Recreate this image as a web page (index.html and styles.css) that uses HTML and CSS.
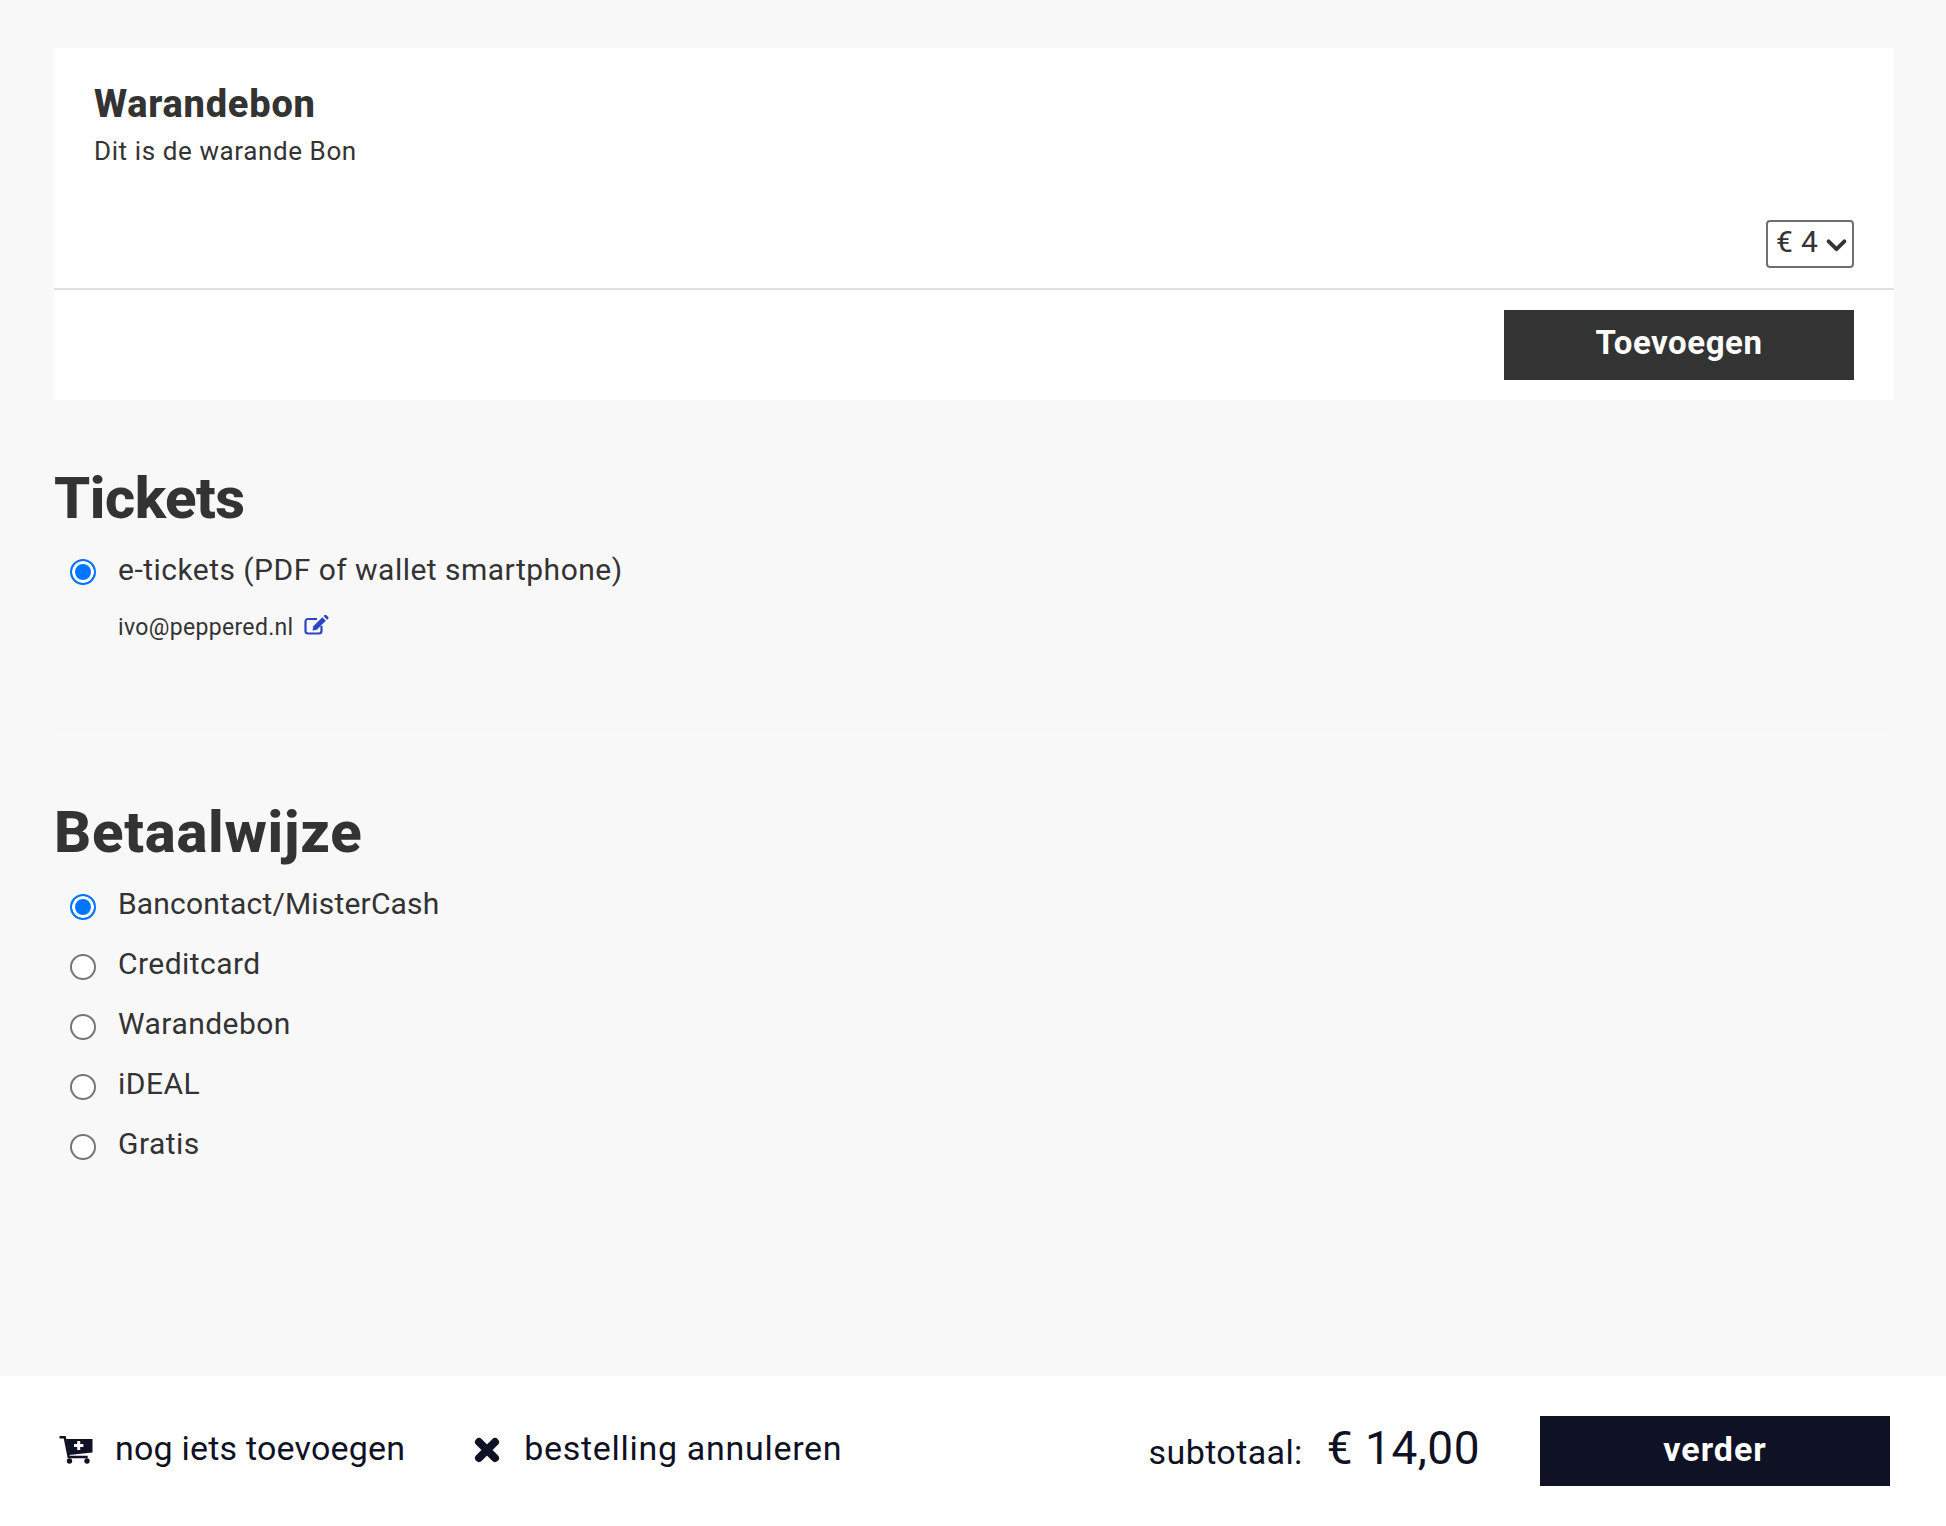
FILE: index.html
```html
<!DOCTYPE html>
<html lang="nl">
<head>
<meta charset="utf-8">
<title>Bestelling</title>
<link rel="stylesheet" href="styles.css">
</head>
<body>
<div class="page">
  <main class="content">
    <section class="card">
      <div class="card-body">
        <h3 class="card-title">Warandebon</h3>
        <p class="card-desc">Dit is de warande Bon</p>
        <div class="card-select">
          <div class="select-box">
            <span class="select-value">€ 4</span>
            <svg class="chevron" viewBox="0 0 20 14"><path d="M2.5 3 10 10.5 17.5 3" fill="none" stroke="#333" stroke-width="3.6" stroke-linecap="round" stroke-linejoin="round"/></svg>
          </div>
        </div>
      </div>
      <div class="card-foot"><button class="btn-add">Toevoegen</button></div>
    </section>

    <section class="block tickets">
      <h2 class="heading">Tickets</h2>
      <label class="option"><input class="radio" type="radio" name="ticket" checked><span class="option-text">e-tickets (PDF of wallet smartphone)</span></label>
      <div class="email"><span class="email-text">ivo@peppered.nl</span>
        <svg class="edit-icon" viewBox="0 0 25 20">
          <path d="M13 4H4A2.5 2.5 0 0 0 1.500 6.500V16A2.500 2.500 0 0 0 4 18.500h11a2.500 2.500 0 0 0 2.500-2.500V11" fill="none" stroke="#2a45c0" stroke-width="2.200"/>
          <path d="M8.500 15.500l.8-4.300L18.300 2.200l3.500 3.500-9 9z" fill="#2a45c0"/>
          <path d="M19.500 1l1-1a1.200 1.200 0 0 1 1.700 0l2 2a1.200 1.200 0 0 1 0 1.700l-1 1z" fill="#2a45c0"/>
        </svg>
      </div>
    </section>

    <section class="block pay">
      <h2 class="heading heading-wide">Betaalwijze</h2>
      <label class="option"><input class="radio" type="radio" name="pay" checked><span class="option-text option-tight">Bancontact/MisterCash</span></label>
      <label class="option"><input class="radio" type="radio" name="pay"><span class="option-text">Creditcard</span></label>
      <label class="option"><input class="radio" type="radio" name="pay"><span class="option-text">Warandebon</span></label>
      <label class="option"><input class="radio" type="radio" name="pay"><span class="option-text">iDEAL</span></label>
      <label class="option"><input class="radio" type="radio" name="pay"><span class="option-text">Gratis</span></label>
    </section>
  </main>

  <footer class="footer">
    <div class="foot-links">
      <a class="foot-link link-add">
        <svg class="cart-icon" viewBox="0 0 34 28">
          <path d="M0.500 1.200h5.200l4 19.800h19" fill="none" stroke="#0f1124" stroke-width="2.400"/>
          <path fill="#0f1124" fill-rule="evenodd" d="M7 3h26.500v13.500L10 19zM18.200 5v3H15v3h3.200v3h3v-3h3.200V8h-3.200V5z"/>
          <circle cx="10.500" cy="25" r="2.700" fill="#0f1124"/>
          <circle cx="28" cy="25" r="2.700" fill="#0f1124"/>
        </svg>
        <span class="link-text-add">nog iets toevoegen</span>
      </a>
      <a class="foot-link link-cancel">
        <svg class="x-icon" viewBox="0 0 26 26"><path d="M5 5 21 21M21 5 5 21" fill="none" stroke="#0f1124" stroke-width="8" stroke-linecap="round"/></svg>
        <span class="link-text-cancel">bestelling annuleren</span>
      </a>
    </div>
    <div class="foot-total">
      <span class="sub-label">subtotaal:</span>
      <span class="sub-value">€ 14,00</span>
      <button class="btn-next">verder</button>
    </div>
  </footer>
</div>
</body>
</html>
```
FILE: styles.css
```css
* { box-sizing: border-box; }
html, body { margin: 0; padding: 0; height: 100%; }
body {
  background: #f8f8f8;
  color: #333;
  font-family: "Roboto", "Liberation Sans", sans-serif;
}
.page { min-height: 1526px; display: flex; flex-direction: column; }
.content { flex: 1; padding: 48px 52px 0 54px; }

.card { background: #fff; height: 352px; display: flex; flex-direction: column; }
.card-body { flex: 0 0 242px; padding: 33px 40px 0; border-bottom: 2px solid #e0e0e0; }
.card-title { margin: 0; font-size: 38px; line-height: 46px; font-weight: 800; letter-spacing: 0.75px; }
.card-desc { margin: 7px 0 0; font-size: 26px; line-height: 34px; letter-spacing: 0.6px; }
.card-select { display: flex; justify-content: flex-end; margin-top: 52px; }
.select-box {
  width: 88px; height: 48px; border: 2px solid #707070; border-radius: 4px;
  display: flex; align-items: center; justify-content: space-between; padding: 0 5px 4px 8px;
}
.select-value { font-size: 30px; line-height: 36px; letter-spacing: 0.4px; }
.chevron { width: 21px; height: 15px; margin-top: 6px; }
.card-foot { flex: 1; display: flex; justify-content: flex-end; padding: 20px 40px 0 0; }
.btn-add {
  width: 350px; height: 70px; border: 0; background: #333; color: #fff;
  font: 700 33px/64px "Roboto", "Liberation Sans", sans-serif;
  letter-spacing: 0.55px;
  padding: 0 0 5px;
}

.block { display: flex; flex-direction: column; }
.tickets { height: 335px; padding-top: 64px; border-bottom: 1px solid #fbfbfb; }
.pay { padding-top: 63px; }
.heading { margin: 0 0 10px; font-size: 58px; line-height: 68px; font-weight: 800; letter-spacing: -0.5px; }
.heading-wide { margin-bottom: 11px; letter-spacing: 0.75px; }
.option { display: flex; align-items: center; height: 60px; padding-left: 16px; }
.radio {
  appearance: none; -webkit-appearance: none; margin: 0 22px 0 0; flex: none;
  width: 26px; height: 26px; border-radius: 50%; background: #fff; border: 2px solid #767676;
}
.radio:checked { border: 2px solid #0075ff; box-shadow: inset 0 0 0 3px #fff; background: #0075ff; }
.option-text { font-size: 30px; line-height: 36px; color: #333; position: relative; top: -3px; letter-spacing: 0.45px; }
.option-tight { letter-spacing: 0.18px; }
.tickets .option-text { letter-spacing: 0.48px; top: -2px; }
.email { display: flex; align-items: center; padding-left: 64px; margin-top: 8px; height: 36px; }
.email-text { font-size: 23px; line-height: 30px; letter-spacing: 0.33px; }
.edit-icon { width: 25px; height: 20px; margin-left: 10px; margin-top: -7px; }

.footer {
  background: #fff; height: 150px; display: flex; justify-content: space-between; align-items: center;
  padding: 0 56px 0 59px; color: #0f1124;
}
.foot-links { display: flex; align-items: center; position: relative; top: -1px; }
.foot-link { display: flex; align-items: center; font-size: 34px; line-height: 40px; }
.link-add { margin-right: 69px; }
.link-text-add { letter-spacing: 0.2px; position: relative; top: -2px; }
.link-text-cancel { letter-spacing: 0.7px; position: relative; top: -2px; }
.cart-icon { width: 34px; height: 28px; margin-right: 22px; }
.x-icon { width: 26px; height: 26px; margin-right: 24px; }
.foot-total { display: flex; align-items: center; }
.sub-label { font-size: 34px; letter-spacing: 0.4px; margin-right: 24px; position: relative; top: 1px; }
.sub-value { font-size: 46px; line-height: 56px; letter-spacing: 0.5px; margin-right: 60px; position: relative; top: -3px; }
.btn-next {
  width: 350px; height: 70px; border: 0; background: #0f1124; color: #fff;
  font: 700 34px/64px "Roboto", "Liberation Sans", sans-serif;
  letter-spacing: 1px;
  padding: 0 0 5px;
}
```
